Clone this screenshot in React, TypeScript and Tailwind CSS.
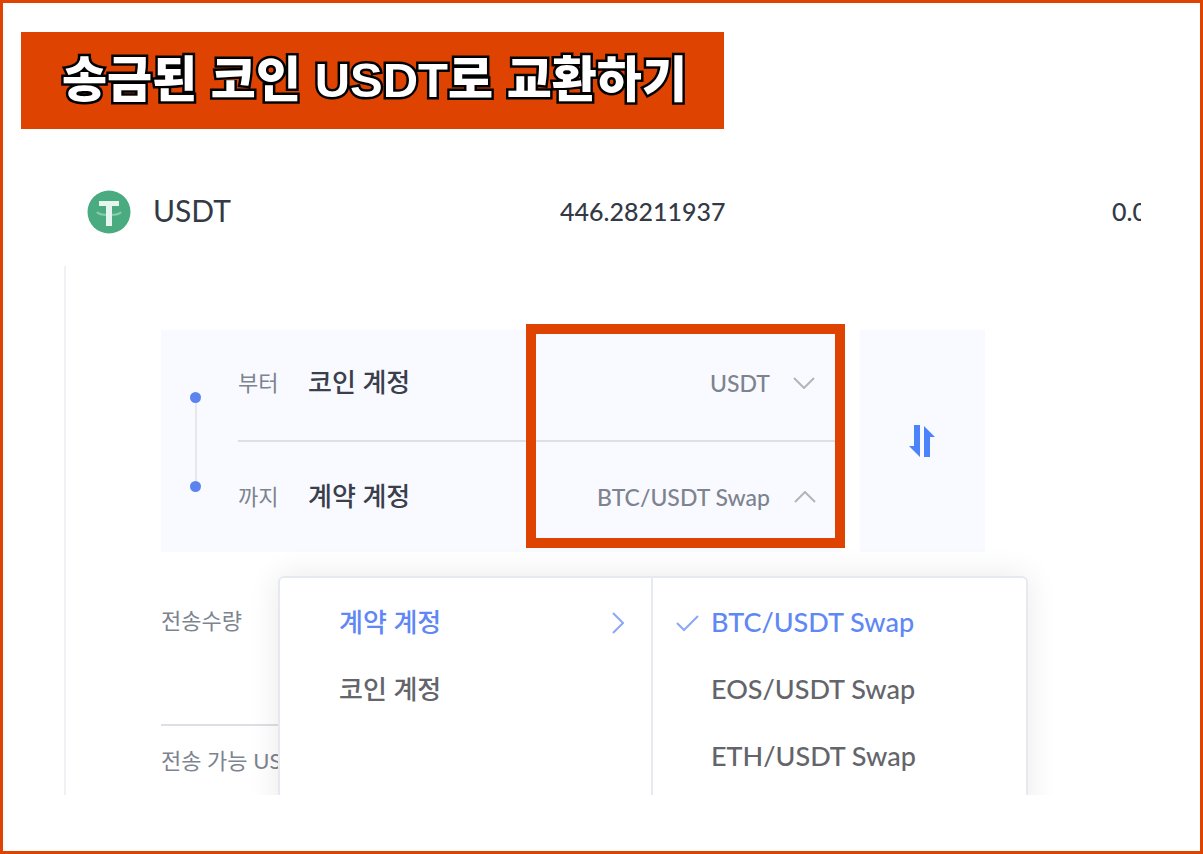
import { useState } from 'react'
import { clsx } from 'clsx'

const ACCOUNTS = ['계약 계정', '코인 계정']
const PAIRS = ['BTC/USDT Swap', 'EOS/USDT Swap', 'ETH/USDT Swap']

function TetherLogo() {
  return (
    <svg viewBox="0 0 44 44" className="size-11 shrink-0" aria-hidden="true">
      <circle cx="22" cy="22" r="21.5" fill="#4bab80" />
      <path d="M10 22c2 4 22 4 24 0" fill="none" stroke="#8ccbaf" strokeWidth="2" />
      <path d="M12 11h20v5h-7v20h-6V16h-7z" fill="#e6f5ee" />
    </svg>
  )
}

function Chevron({ className }: { className?: string }) {
  return (
    <svg viewBox="0 0 22 12" className={clsx('h-3 w-[22px]', className)} fill="none" stroke="currentColor" strokeWidth="2" aria-hidden="true">
      <path d="M1 1l10 10L21 1" />
    </svg>
  )
}

function SwapIcon() {
  return (
    <svg viewBox="0 0 28 34" className="mr-0.5 h-[34px] w-7" fill="#4a83fb" aria-hidden="true">
      <path d="M6 1h6v32L1 22h5z" />
      <path d="M16 33h6V13h5L16 2z" />
    </svg>
  )
}

function AssetRow() {
  return (
    <div className="flex h-11 items-center pl-[23px] text-[#333945]">
      <TetherLogo />
      <span className="w-[429px] pb-1 pl-[22px] text-[30px] leading-none">USDT</span>
      <span className="flex-1 text-[25px] font-medium">446.28211937</span>
      <span className="w-[29px] overflow-hidden whitespace-nowrap text-[25px] font-medium">0.00</span>
    </div>
  )
}

function TransferCard({ open, pair, onToggle }: { open: boolean; pair: string; onToggle: () => void }) {
  return (
    <div className="relative flex h-[222px] w-[680px] bg-[#f9faff] pl-[29px]">
      <div className="flex w-[11px] flex-col items-center pt-[62px]">
        <span className="size-[11px] rounded-full bg-[#5c84ee]" />
        <span className="h-[78px] w-[2px] bg-[#e6e8ee]" />
        <span className="size-[11px] rounded-full bg-[#5c84ee]" />
      </div>
      <div className="ml-[37px] flex-1">
        <div className="relative flex h-28 items-center border-b-2 border-[#dddfe5] pb-1">
          <label htmlFor="coin" className="flex items-center pb-0.5">
            <span className="w-[70px] text-[22px] text-[#7d838f]">부터</span>
            <span className="text-[26px] font-medium text-[#3a3f4b]">코인 계정</span>
          </label>
          <select id="coin" className="flex-1 appearance-none bg-transparent pr-[71px] text-right text-[23px] font-medium text-[#7d838f] outline-none">
            <option>USDT</option>
          </select>
          <Chevron className="pointer-events-none absolute right-[26px] text-[#b2b4b8]" />
        </div>
        <div className="flex h-[110px] items-center">
          <div className="flex items-center pb-0.5">
            <span className="w-[70px] text-[22px] text-[#7d838f]">까지</span>
            <span className="text-[26px] font-medium text-[#3a3f4b]">계약 계정</span>
          </div>
          <button
            type="button"
            aria-haspopup="menu"
            aria-expanded={open}
            onClick={onToggle}
            className="flex flex-1 items-center justify-end gap-6 pr-[25px] text-[23px] font-medium text-[#7d838f]"
          >
            {pair}
            <Chevron className={clsx('text-[#b2b4b8]', open && 'rotate-180')} />
          </button>
        </div>
      </div>
      {/* Highlight frame */}
      <div className="pointer-events-none absolute -top-1.5 -right-1 h-56 w-[319px] border-10 border-[#df4301]" />
    </div>
  )
}

function AccountMenu({ pair, onSelect }: { pair: string; onSelect: (pair: string) => void }) {
  return (
    <div role="menu" className="absolute top-[310px] left-[212px] flex h-[280px] w-[750px] rounded-md border-2 border-[#e6eaf0] bg-white font-medium text-[#63656a] shadow-[0_0_32px_rgba(0,0,0,0.09)]">
      <div className="w-[373px] border-r-2 border-[#e6eaf0] pt-[11px] text-[26px]">
        {ACCOUNTS.map((account, i) => (
          <button
            key={account}
            type="button"
            role="menuitem"
            className={clsx('flex h-[67px] w-full items-center justify-between pr-[22px] pl-[59px]', i === 0 && 'text-[#5f87f5]')}
          >
            {account}
            {i === 0 && <Chevron className="-rotate-90 text-[#8ba8f7]" />}
          </button>
        ))}
      </div>
      <div className="flex-1 pt-[11px] text-[27px]">
        {PAIRS.map((name) => (
          <button
            key={name}
            type="button"
            role="menuitemradio"
            aria-checked={name === pair}
            onClick={() => onSelect(name)}
            className={clsx('flex h-[67px] w-full items-center gap-3 pl-[23px]', name === pair && 'text-[#5f87f5]')}
          >
            <svg viewBox="0 0 23 18" className={clsx('h-[18px] w-[23px]', name !== pair && 'invisible')} fill="none" stroke="#8ba8f7" strokeWidth="2" aria-hidden="true">
              <path d="M1 9l7 7L22 2" />
            </svg>
            {name}
          </button>
        ))}
      </div>
    </div>
  )
}

export default function App() {
  const [open, setOpen] = useState(true)
  const [pair, setPair] = useState(PAIRS[0])

  return (
    <main className="min-h-screen border-3 border-[#df4301] bg-white px-[18px] pt-[29px] pb-14 font-[Lato,'Noto_Sans_CJK_KR',sans-serif]">
      <h1 className="flex h-[97px] w-fit items-center bg-[#df4301] pr-[37px] pl-[41px] font-['Liberation_Sans','Noto_Sans_CJK_KR',sans-serif] text-[49px] font-black whitespace-nowrap text-white [-webkit-text-stroke:5px_black] [paint-order:stroke_fill]">
        송금된 코인 USDT로 교환하기
      </h1>

      <section className="mt-[61px] mr-[41px] ml-[43px]">
        <AssetRow />

        <div className="relative mt-8 h-[529px] overflow-hidden border-l-2 border-[#f0f1f4] pt-16 pl-[95px]">
          <div className="flex gap-[19px]">
            <TransferCard open={open} pair={pair} onToggle={() => setOpen(!open)} />
            <button type="button" aria-label="전환" className="flex w-[125px] items-center justify-center bg-[#f9faff]">
              <SwapIcon />
            </button>
          </div>

          <div className="w-[824px] text-[22px] text-[#7d838f]">
            <div className="h-[174px] border-b-2 border-[#dddfe5] pt-[52px]">전송수량</div>
            <div className="pt-[18px]">전송 가능 USDT</div>
          </div>

          {open && <AccountMenu pair={pair} onSelect={setPair} />}
        </div>
      </section>
    </main>
  )
}
